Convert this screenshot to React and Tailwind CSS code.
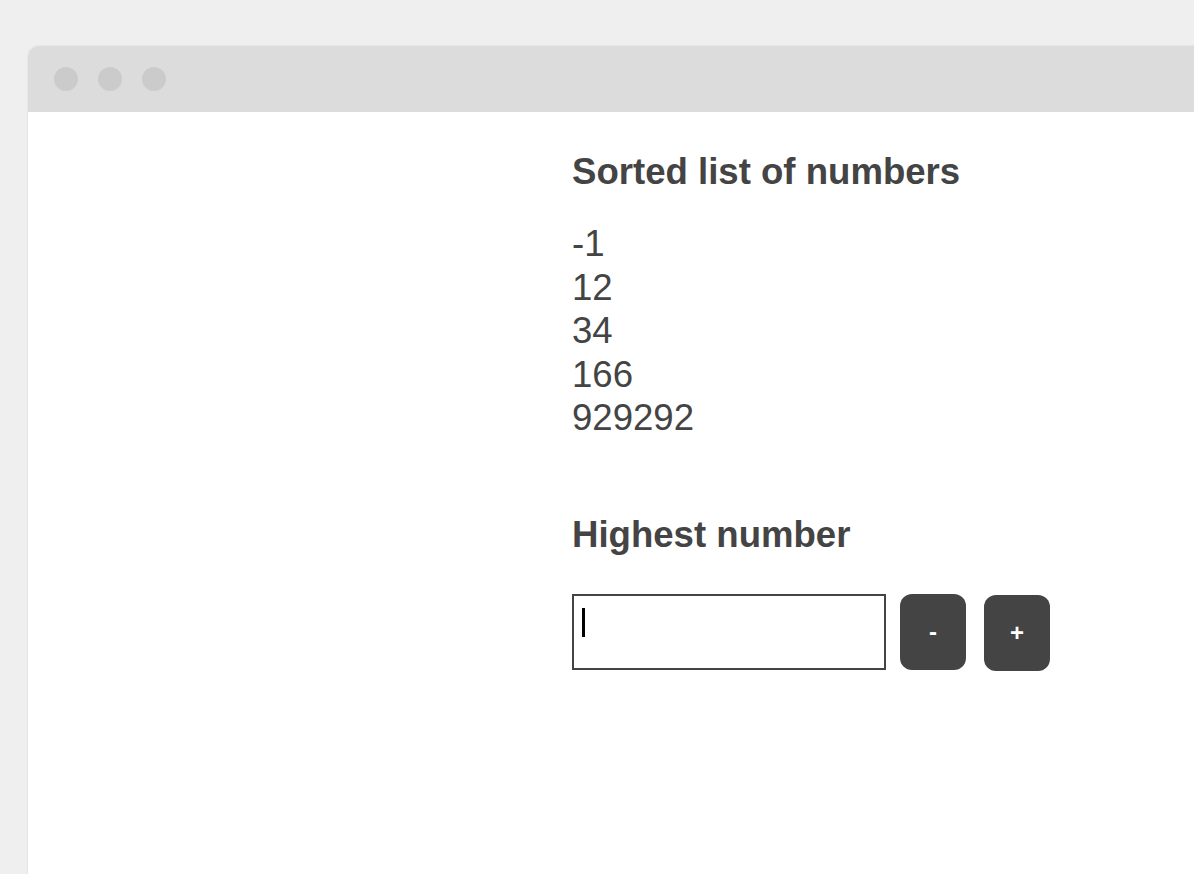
const numbers = [-1, 12, 34, 166, 929292];

export default function App() {
  return (
    <div className="h-[874px] w-full overflow-hidden bg-[#efefef] pl-[28px] pt-[46px] font-['Liberation_Sans',Arial,sans-serif] text-[#444444]">
      <div className="w-[1200px] h-[900px] rounded-tl-[10px] bg-white shadow-[0_0_3px_rgba(0,0,0,0.08)] overflow-hidden">
        {/* title bar */}
        <div className="flex h-[66px] items-center gap-[20px] bg-[#dcdcdc] pl-[26px]">
          <span className="h-[24px] w-[24px] rounded-full bg-[#cbcbcb]" />
          <span className="h-[24px] w-[24px] rounded-full bg-[#cbcbcb]" />
          <span className="h-[24px] w-[24px] rounded-full bg-[#cbcbcb]" />
        </div>

        <div className="pl-[544px] pt-[38px]">
          <h2 className="text-[36.6px] font-bold leading-[44px]">Sorted list of numbers</h2>
          <ul className="mt-[28px] text-[36.6px] leading-[43.5px]">
            {numbers.map((n) => (
              <li key={n}>{n}</li>
            ))}
          </ul>

          <h2 className="mt-[73px] text-[36.6px] font-bold leading-[44px]">Highest number</h2>

          <div className="mt-[37px] flex items-start">
            <div className="relative">
              <input
                type="text"
                className="block h-[76px] w-[314px] border-2 border-[#444444] bg-white outline-none"
              />
              <span className="absolute left-[10px] top-[14px] h-[29px] w-[2.5px] bg-black" />
            </div>
            <button className="ml-[14px] h-[76px] w-[66px] rounded-[12px] bg-[#444444] text-[24px] font-bold leading-none text-white">
              -
            </button>
            <button className="ml-[18px] mt-px h-[76px] w-[66px] rounded-[12px] bg-[#444444] text-[24px] font-bold leading-none text-white">
              +
            </button>
          </div>
        </div>
      </div>
    </div>
  );
}
